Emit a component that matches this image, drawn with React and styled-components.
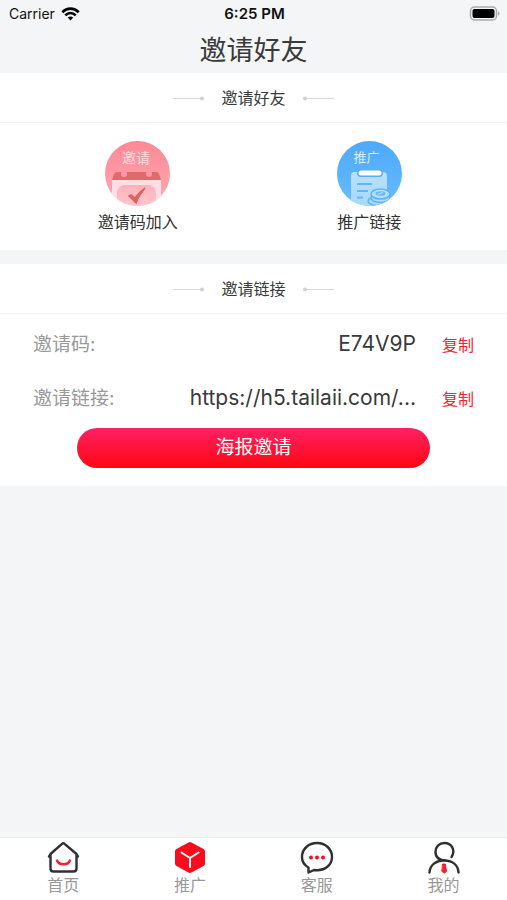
import React from "react";
import styled, { createGlobalStyle } from "styled-components";

const GlobalStyle = createGlobalStyle`
  *, *::before, *::after { box-sizing: border-box; }
  body {
    margin: 0;
    background: #f4f5f7;
    color: #3a3a3a;
    font-family: Inter, "Noto Sans CJK SC", sans-serif;
  }
  button { font-family: inherit; border: 0; padding: 0; cursor: pointer; }
`;

const Screen = styled.div`
  min-height: 100vh;
  display: flex;
  flex-direction: column;
`;

const StatusBar = styled.div`
  height: 27px;
  padding: 0 7px 0 9px;
  display: grid;
  grid-template-columns: 1fr auto 1fr;
  align-items: center;
  font-size: 14px;
  line-height: 20px;
  color: #111;
`;

const Carrier = styled.span`
  display: flex;
  align-items: center;
  gap: 6px;
`;

const Clock = styled.time`
  font-size: 15px;
  font-weight: 600;
`;

const Battery = styled.svg`
  justify-self: end;
`;

const Title = styled.h1`
  margin: 0;
  padding-top: 2px;
  font-size: 27px;
  line-height: 44px;
  font-weight: 400;
  text-align: center;
`;

const Content = styled.main`
  flex: 1;
  display: flex;
  flex-direction: column;
  gap: 14px;
`;

const Card = styled.section`
  background: #fff;
`;

const CardHeader = styled.header`
  height: 50px;
  border-bottom: 1px solid #f3f4f5;
  display: flex;
  align-items: center;
  justify-content: center;
  gap: 16px;
`;

const CardTitle = styled.h2`
  margin: 0;
  font-size: 16px;
  line-height: 24px;
  font-weight: 400;
`;

const Options = styled.div`
  display: flex;
  padding: 18px 22px 16px;
`;

const Option = styled.button`
  flex: 1;
  background: none;
  display: flex;
  flex-direction: column;
  align-items: center;
  gap: 4px;
  font-size: 16px;
  line-height: 24px;
  color: #333;
`;

const Details = styled.div`
  padding: 3px 33px 18px;
  display: flex;
  flex-direction: column;
`;

const DetailRow = styled.div`
  height: 54px;
  display: flex;
  align-items: baseline;
  line-height: 54px;
`;

const DetailLabel = styled.span`
  font-size: 19px;
  color: #999;
`;

const DetailValue = styled.span`
  flex: 1;
  text-align: right;
  font-size: 21px;
  margin-right: 26px;
`;

const CopyButton = styled.button`
  background: none;
  font-size: 16px;
  line-height: 24px;
  color: #f5222d;
`;

const PosterButton = styled.button`
  align-self: center;
  width: 80%;
  min-width: 352px;
  height: 40px;
  margin-top: 3px;
  border-radius: 20px;
  background: linear-gradient(#ff2164, #ff0610);
  color: #fff;
  font-size: 19px;
  line-height: 28px;
`;

const TabBar = styled.nav`
  height: 63px;
  background: #fff;
  border-top: 1px solid #eceef0;
  display: flex;
`;

const Tab = styled.a`
  flex: 1;
  padding-top: 2px;
  display: flex;
  flex-direction: column;
  align-items: center;
  font-size: 16px;
  line-height: 22px;
  color: #999;
  text-decoration: none;
`;

const Flourish = ({ flip }) => (
  <svg width="32" height="6" viewBox="0 0 32 6" aria-hidden="true">
    <g transform={flip ? "translate(32 0) scale(-1 1)" : undefined}>
      <path d="M0 3.5H30" stroke="#d8d8d8" />
      <circle cx="29" cy="3.5" r="2" fill="#d0d0d0" />
    </g>
  </svg>
);

const Wifi = () => (
  <svg width="19" height="14" viewBox="0 0 19 14" fill="none" stroke="#000" strokeWidth="2.7" aria-hidden="true">
    <path d="M1.3 5.3C6 .5 13 .5 17.7 5.3" />
    <path d="M4.3 8.4C7.4 5.3 11.6 5.3 14.7 8.4" />
    <path d="M6.8 10.5Q9.5 8.4 12.2 10.5L9.5 13.5Z" fill="#000" stroke="none" />
  </svg>
);

const InviteIcon = () => (
  <svg width="65" height="65" viewBox="0 0 65 65" aria-hidden="true">
    <defs>
      <linearGradient id="pinkDisc" x2="0" y2="1">
        <stop stopColor="#fb8995" />
        <stop offset="1" stopColor="#ffabb5" />
      </linearGradient>
      <linearGradient id="pinkPad" x2="0" y2="1">
        <stop stopColor="#ffb1ba" />
        <stop offset="1" stopColor="#ffc9cf" />
      </linearGradient>
      <clipPath id="pinkClip"><circle cx="32.5" cy="32.5" r="32.5" /></clipPath>
    </defs>
    <g clipPath="url(#pinkClip)">
      <rect width="65" height="65" fill="url(#pinkDisc)" />
      <path d="M7 39H56V65H7Z" fill="#ffdfe3" />
      <path d="M12 31H51Q53 31 54 33L56 39H7L9 33Q10 31 12 31Z" fill="#e2696b" />
      <rect x="12" y="44" width="39" height="24" rx="8" fill="url(#pinkPad)" />
      <circle cx="19" cy="33" r="3" fill="#ff9ba7" />
      <circle cx="44" cy="33" r="3" fill="#ff9ba7" />
      <path d="M24 55L26 54L30 57Q34 51 40 47Q34 54 31 62Z" fill="#d96560" stroke="#d96560" strokeWidth="1.500" />
    </g>
    <text x="31" y="22" textAnchor="middle" fontSize="14" fill="#ffdce0">邀请</text>
  </svg>
);

const PromoteIcon = () => (
  <svg width="65" height="65" viewBox="0 0 65 65" aria-hidden="true">
    <defs>
      <linearGradient id="blueDisc" x2="0" y2="1">
        <stop stopColor="#50a9f8" />
        <stop offset="1" stopColor="#65bcff" />
      </linearGradient>
      <linearGradient id="bluePad" x2="0" y2="1">
        <stop stopColor="#b9e1ff" />
        <stop offset="1" stopColor="#a5d9ff" />
      </linearGradient>
      <clipPath id="blueClip"><circle cx="32.5" cy="32.5" r="32.5" /></clipPath>
    </defs>
    <g clipPath="url(#blueClip)">
      <rect width="65" height="65" fill="url(#blueDisc)" />
      <path d="M17 31H46Q50 31 50 35V65H14V35Q14 31 17 31Z" fill="url(#bluePad)" />
      <rect x="20" y="28" width="26" height="8" rx="4" fill="#58aefa" />
      <rect x="21.500" y="29.500" width="23" height="5" rx="2.500" fill="#fff" />
      <path d="M20 43H35M20 50H31M20 56.500H26" stroke="#65b5f8" strokeWidth="2" />
      <g fill="#a9daff" stroke="#5bb1f9" strokeWidth="1.500">
        <ellipse cx="40" cy="60" rx="9" ry="4.500" />
        <ellipse cx="43.500" cy="57" rx="9.500" ry="4.500" />
        <ellipse cx="43.500" cy="53" rx="9.500" ry="5" fill="#b5dfff" />
        <ellipse cx="43.500" cy="52.500" rx="5" ry="2.300" fill="#6bb8fa" stroke="none" />
      </g>
      <path d="M40.500 53.500L46 51.500" stroke="#b9e1ff" />
    </g>
    <text x="29.500" y="21" textAnchor="middle" fontSize="13" fill="#d5ecff">推广</text>
  </svg>
);

const tabIconProps = {
  width: 34,
  height: 34,
  viewBox: "0 0 34 34",
  fill: "none",
  strokeLinecap: "round",
  strokeLinejoin: "round",
  strokeWidth: 2.4,
  "aria-hidden": true,
};

const HomeIcon = () => (
  <svg {...tabIconProps}>
    <path d="M3 16.500L4.500 14L16 3.800Q17.300 2.600 18.600 3.800L30.500 14L32 16.500M4.500 14V28.500Q4.500 31.500 7.500 31.500H27.500Q30.500 31.500 30.500 28.500V14" stroke="#303030" />
    <path d="M11 20.500C13 25.500 22 25.500 24 20.500" stroke="#f51f32" />
  </svg>
);

const CubeIcon = () => (
  <svg {...tabIconProps}>
    <path d="M15.500 2.500Q17 1.700 18.500 2.500L30.500 9Q32 9.800 32 11.300V23.700Q32 25.200 30.500 26L18.500 32.500Q17 33.300 15.500 32.500L3.500 26Q2 25.200 2 23.700V11.300Q2 9.800 3.500 9Z" fill="#fa0c1e" />
    <path d="M8.500 12.500L17 18L25.500 12.500M17 18V27" stroke="#fff" strokeWidth="2" />
  </svg>
);

const ChatIcon = () => (
  <svg {...tabIconProps}>
    <path d="M8.500 27.500V32.500L14 30C24 31.700 32 25.500 32 17C32 9 25.500 3 17 3C8.500 3 2 9 2 17C2 21.500 4.500 25.300 8.500 27.500Z" stroke="#303030" />
    <g fill="#fa0c1e">
      <circle cx="11" cy="17.500" r="2" />
      <circle cx="17" cy="17.500" r="2" />
      <circle cx="23" cy="17.500" r="2" />
    </g>
  </svg>
);

const PersonIcon = () => (
  <svg {...tabIconProps}>
    <path d="M24.500 17C29 10 24.500 3 17.300 3C12 3 8.500 7 8.500 11.800C8.500 17 12 20.500 19 20.500M2.500 32.500C3 25 9 20.500 17 20.500C25.500 20.500 31 25 31.500 32.500" stroke="#303030" />
    <path d="M16 24H18.400L19.500 31.500L17.200 33L15 31.500Z" fill="#f51f32" stroke="#f51f32" strokeWidth="1" />
  </svg>
);

const options = [
  { label: "邀请码加入", Icon: InviteIcon },
  { label: "推广链接", Icon: PromoteIcon },
];

const details = [
  { label: "邀请码:", value: "E74V9P" },
  { label: "邀请链接:", value: "https://h5.tailaii.com/..." },
];

const tabs = [
  { label: "首页", Icon: HomeIcon },
  { label: "推广", Icon: CubeIcon, current: true },
  { label: "客服", Icon: ChatIcon },
  { label: "我的", Icon: PersonIcon },
];

const SectionHeader = ({ children }) => (
  <CardHeader>
    <Flourish />
    <CardTitle>{children}</CardTitle>
    <Flourish flip />
  </CardHeader>
);

export default function App() {
  return (
    <Screen lang="zh-CN">
      <GlobalStyle />
      <StatusBar>
        <Carrier>Carrier <Wifi /></Carrier>
        <Clock>6:25 PM</Clock>
        <Battery width="31" height="15" viewBox="0 0 31 15" aria-hidden="true">
          <rect x="1.500" y="1" width="26" height="13" rx="4" fill="#f4f5f7" stroke="#aaa" strokeWidth="1.500" />
          <rect x="3.500" y="3" width="22" height="9" rx="2" fill="#000" />
          <path d="M29 5Q32 7.500 29 10Z" fill="#aaa" />
        </Battery>
      </StatusBar>
      <Title>邀请好友</Title>
      <Content>
        <Card>
          <SectionHeader>邀请好友</SectionHeader>
          <Options>
            {options.map(({ label, Icon }) => (
              <Option key={label} type="button"><Icon />{label}</Option>
            ))}
          </Options>
        </Card>
        <Card>
          <SectionHeader>邀请链接</SectionHeader>
          <Details>
            {details.map(({ label, value }) => (
              <DetailRow key={label}>
                <DetailLabel>{label}</DetailLabel>
                <DetailValue>{value}</DetailValue>
                <CopyButton type="button">复制</CopyButton>
              </DetailRow>
            ))}
            <PosterButton type="button">海报邀请</PosterButton>
          </Details>
        </Card>
      </Content>
      <TabBar>
        {tabs.map(({ label, Icon, current }) => (
          <Tab key={label} href="#" aria-current={current ? "page" : undefined}>
            <Icon />
            {label}
          </Tab>
        ))}
      </TabBar>
    </Screen>
  );
}
